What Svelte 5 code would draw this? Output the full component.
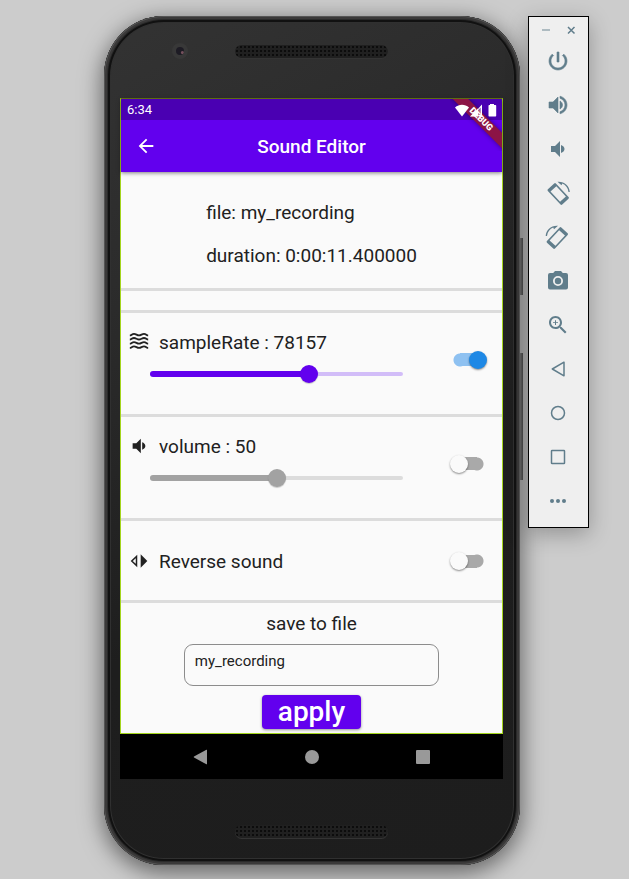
<script>
  let sampleOn = $state(true);
  let volumeOn = $state(false);
  let reverseOn = $state(false);
  let sampleRate = $state(78157);
  let volume = $state(50);
  let fileName = $state('my_recording');
  const maxRate = 124400;

  const tools = ['Power', 'Volume up', 'Volume down', 'Rotate left', 'Rotate right', 'Take screenshot', 'Zoom', 'Back', 'Home', 'Overview', 'More'];
</script>

{#snippet speaker()}
  <svg viewBox="1 1 22 22" aria-hidden="true"><path d="M5 9v6h4l5 5V4L9 9H5zm10.500-1v8c2-.7 3.500-2.200 3.500-4s-1.500-3.300-3.500-4z" /></svg>
{/snippet}

{#snippet toolIcon(name)}
  <svg viewBox="0 0 24 24" aria-hidden="true">
    {#if name === 'Power'}
      <path d="M13 3h-2v10h2V3zm4.830 2.170l-1.420 1.420C17.990 7.860 19 9.810 19 12c0 3.870-3.130 7-7 7s-7-3.130-7-7c0-2.190 1.010-4.140 2.580-5.420L6.170 5.170C4.230 6.820 3 9.260 3 12c0 4.970 4.030 9 9 9s9-4.030 9-9c0-2.740-1.230-5.180-3.170-6.830z" stroke="currentColor" stroke-width=".6" />
    {:else if name === 'Volume up'}
      <path d="M3 9v6h4l5 5V4L7 9H3zm13.500 3c0-1.770-1.020-3.290-2.500-4.030v8.050c1.480-.73 2.500-2.250 2.500-4.020zM14 3.230v2.060c2.890.86 5 3.540 5 6.710s-2.110 5.850-5 6.710v2.060c4.010-.91 7-4.490 7-8.770s-2.990-7.860-7-8.770z" stroke="currentColor" stroke-width=".6" />
    {:else if name === 'Volume down'}
      <path d="M5 9v6h4l5 5V4L9 9H5zm10-1v8c2-.7 3.500-2.200 3.500-4s-1.500-3.300-3.500-4z" />
    {:else if name === 'Rotate left' || name === 'Rotate right'}
      <g transform={name === 'Rotate right' ? 'matrix(-1 0 0 1 23.500 0)' : ''}>
        <path transform="translate(12.200 13) rotate(-43)" fill-rule="evenodd" d="M-4.300-10.500h8.600a1.200 1.200 0 0 1 1.200 1.200v18.600a1.200 1.200 0 0 1-1.200 1.200h-8.600a1.200 1.200 0 0 1-1.200-1.200v-18.600a1.200 1.200 0 0 1 1.200-1.200zM-4-7v14h8v-14z" />
        <path d="M11.500.8l4 3.400.8-1.600c3.300 1.400 5.700 4.400 6.200 8.400h1.300C23.500 5 18.500.3 11.500.8z" />
      </g>
    {:else if name === 'Take screenshot'}
      <path fill-rule="evenodd" d="M9 2L7.200 4H4a2 2 0 0 0-2 2v12.500a2 2 0 0 0 2 2h16a2 2 0 0 0 2-2V6a2 2 0 0 0-2-2h-3.200L15 2H9zM12 17a5 5 0 1 1 0-10 5 5 0 0 1 0 10z" />
      <circle cx="12" cy="12" r="3.200" />
    {:else if name === 'Zoom'}
      <path d="M15.500 14h-.79l-.28-.27C15.410 12.590 16 11.110 16 9.500 16 5.910 13.090 3 9.500 3S3 5.910 3 9.500 5.910 16 9.500 16c1.610 0 3.090-.59 4.230-1.570l.27.28v.79l5 4.990L20.490 19l-4.990-5zm-6 0C7.010 14 5 11.990 5 9.500S7.010 5 9.500 5 14 7.010 14 9.500 11.990 14 9.500 14zM12 9.200h-2v-2h-1v2H7v.9h2v2h1v-2h2v-.9z" />
    {:else if name === 'Back'}
      <path d="M18 5.200v13.600L6.300 12z" class="line" />
    {:else if name === 'Home'}
      <circle cx="12" cy="12" r="6.500" class="line" />
    {:else if name === 'Overview'}
      <rect x="5.500" y="5.500" width="13" height="13" rx=".6" class="line" />
    {:else}
      <circle cx="6" cy="12" r="2" /><circle cx="12" cy="12" r="2" /><circle cx="18" cy="12" r="2" />
    {/if}
  </svg>
{/snippet}

<div class="desk">
  <div class="phone">
    <span class="side power"></span>
    <span class="side rocker"></span>
    <div class="forehead">
      <span class="camera"></span>
      <span class="grille"></span>
    </div>

    <main class="screen">
      <header>
        <div class="status">
          <span>6:34</span>
          <svg class="signals" viewBox="0 0 42 14" aria-hidden="true">
            <path d="M7 13.500L0 4.500C4 .8 10 .8 14 4.500z" />
            <path d="M15 13.500L27 1.500v12z" opacity=".35" />
            <path d="M15 13.500l8-8v8zM24 13.500v-1.500h1.700V4.600L23 7.300 22 7.200l5-5.700v12z" />
            <path d="M35 2V1h4v1h1.500q.7 0 .7.700v10.100q0 .7-.7.700h-6.300q-.7 0-.7-.7V2.700q0-.7.7-.7z" />
          </svg>
        </div>
        <div class="appbar">
          <button class="back" aria-label="Back">
            <svg viewBox="0 0 24 24" aria-hidden="true"><path d="M20 11H7.830l5.590-5.590L12 4l-8 8 8 8 1.410-1.410L7.830 13H20v-2z" /></svg>
          </button>
          <h1>Sound Editor</h1>
        </div>
        <div class="corner"><span class="ribbon">DEBUG</span></div>
      </header>

      <section class="info">
        <div>
          <p>file: my_recording</p>
          <p>duration: 0:00:11.400000</p>
        </div>
      </section>
      <div class="spacer"></div>

      <section class="row">
        <div class="main">
          <label class="name" for="rate">
            <svg viewBox="0 0 24 24" class="waves" aria-hidden="true">
              {#each [3, 8, 13, 18] as y}
                <path d="M1 {y + 1}c2 0 2.500-1.800 5-1.800s3.500 1.800 6 1.800 3.500-1.800 6-1.800 3 1.800 5 1.800" />
              {/each}
            </svg>
            <span>sampleRate : {sampleRate}</span>
          </label>
          <div class="slider" class:off={!sampleOn}>
            <span class="rail"><span style="width: {(sampleRate / maxRate) * 100}%"></span></span>
            <input id="rate" type="range" min="0" max={maxRate} bind:value={sampleRate} disabled={!sampleOn} />
          </div>
        </div>
        <input class="switch" type="checkbox" role="switch" aria-label="Change sample rate" bind:checked={sampleOn} />
      </section>

      <section class="row">
        <div class="main">
          <label class="name" for="volume">{@render speaker()}<span>volume : {volume}</span></label>
          <div class="slider" class:off={!volumeOn}>
            <span class="rail"><span style="width: {volume}%"></span></span>
            <input id="volume" type="range" min="0" max="100" bind:value={volume} disabled={!volumeOn} />
          </div>
        </div>
        <input class="switch" type="checkbox" role="switch" aria-label="Change volume" bind:checked={volumeOn} />
      </section>

      <section class="row short">
        <label class="name" for="reverse">
          <svg viewBox="0 0 24 24" aria-hidden="true">
            <path d="M9 6.500v11L3.300 12z" fill="none" stroke="currentColor" stroke-width="1.800" /><path d="M14 4v16l8-8z" />
          </svg>
          <span>Reverse sound</span>
        </label>
        <input id="reverse" class="switch" type="checkbox" role="switch" bind:checked={reverseOn} />
      </section>

      <form class="save" onsubmit={(e) => e.preventDefault()}>
        <label for="file">save to file</label>
        <input id="file" type="text" bind:value={fileName} />
        <button type="submit">apply</button>
      </form>
    </main>

    <nav>
      <button aria-label="Back"><svg viewBox="0 0 16 16"><path d="M14 1v14q0 .5-.6.300L1 8.500q-.5-.5 0-1L13.400.700q.6-.2.600.300z" /></svg></button>
      <button aria-label="Home"><svg viewBox="0 0 16 16"><circle cx="8" cy="8" r="7" /></svg></button>
      <button aria-label="Overview"><svg viewBox="0 0 16 16"><rect x="1" y="1" width="14" height="14" rx="1" /></svg></button>
    </nav>
    <div class="chin"><span class="grille"></span></div>
  </div>

  <aside>
    <div class="window">
      <button aria-label="Minimize"><svg viewBox="0 0 10 10"><path d="M1 5h8" opacity=".6" /></svg></button>
      <button aria-label="Close"><svg viewBox="0 0 10 10"><path d="M2 2l6.500 6.500M8.500 2L2 8.500" /></svg></button>
    </div>
    {#each tools as name}
      <button class="tool" aria-label={name}>{@render toolIcon(name)}</button>
    {/each}
  </aside>
</div>

<style>
  :global(body) {
    background: #ccc;
  }
  .desk {
    display: flex;
    align-items: flex-start;
    gap: 8px;
    box-sizing: border-box;
    min-height: 100vh;
    padding: 16px 40px 14px 104px;
    font-family: Roboto, "Liberation Sans", sans-serif;
    color: #212121;
    overflow: hidden;
  }
  button {
    padding: 0;
    border: 0;
    background: none;
    color: inherit;
    font-family: inherit;
    cursor: pointer;
  }
  svg {
    display: block;
    fill: currentColor;
  }

  .phone {
    position: relative;
    flex: 1;
    min-width: 0;
    box-sizing: border-box;
    padding: 0 17px 0 16px;
    border-radius: 60px;
    background: linear-gradient(150deg, #333 0%, #2c2c2c 25%, #1e1e1e 60%, #1d1d1d 100%);
    box-shadow:
      inset 0 0 0 1px #555,
      inset 0 0 0 3px #3a3939,
      inset 0 0 0 4px #2a2a2a,
      inset 0 0 0 6px #111,
      inset 0 0 0 7px #303030,
      0 6px 22px 2px rgba(0, 0, 0, 0.5);
  }
  .side {
    position: absolute;
    left: 100%;
    width: 3px;
    background: linear-gradient(90deg, #666, #444);
  }
  .power {
    top: 222px;
    height: 57px;
  }
  .rocker {
    top: 337px;
    height: 127px;
  }
  .forehead {
    display: grid;
    grid-template-columns: 1fr auto 1fr;
    align-items: center;
    height: 70px;
    padding-bottom: 12px;
  }
  .forehead .grille {
    grid-column: 2;
  }
  .camera {
    width: 8px;
    height: 8px;
    margin-left: 52px;
    border: 4px solid #383838;
    border-radius: 50%;
    background: radial-gradient(circle at 80% 70%, #75505c 0 1px, #1d1b24 2px);
  }
  .grille {
    width: 153px;
    height: 13px;
    border-radius: 7px;
    background: radial-gradient(circle, #0c0c0c 1px, transparent 1px) 0 0 / 4px 4px, #202020;
    box-shadow: 0 1px 0 #343434;
  }
  .chin {
    display: flex;
    justify-content: center;
    align-items: center;
    height: 68px;
    padding-top: 18px;
  }

  .screen {
    border: 1px solid #a4d51c;
    border-top-color: #6b7d13;
    background: #fafafa;
    font-size: 19px;
  }
  header {
    position: relative;
    background: #6200ee;
    color: #fff;
    box-shadow: 0 1px 4px rgba(0, 0, 0, 0.5);
  }
  .status {
    display: flex;
    justify-content: space-between;
    align-items: center;
    height: 21px;
    padding: 0 5px 0 6px;
    background: #4a00b2;
    font-size: 13px;
  }
  .signals {
    position: relative;
    z-index: 2;
    width: 42px;
    height: 14px;
  }
  .appbar {
    display: grid;
    grid-template-columns: 50px 1fr 50px;
    align-items: center;
    height: 52px;
  }
  .back {
    display: grid;
    place-items: center;
    height: 52px;
  }
  .back svg {
    width: 22px;
    height: 22px;
  }
  h1 {
    margin: 0;
    text-align: center;
    font-size: 19px;
    font-weight: 500;
  }
  .corner {
    position: absolute;
    top: 0;
    right: 0;
    width: 52px;
    height: 52px;
    overflow: hidden;
  }
  .ribbon {
    position: absolute;
    top: 15px;
    left: -14px;
    width: 90px;
    height: 11px;
    transform: rotate(45deg);
    background: #8c1446;
    box-shadow: 0 0 5px rgba(0, 0, 0, 0.4);
    font-size: 9px;
    line-height: 11px;
    font-weight: 900;
    text-align: center;
  }

  .info {
    display: flex;
    justify-content: center;
    padding: 19px 0 11px;
    border-bottom: 3px solid #dcdcdc;
  }
  .info p {
    margin: 0;
    height: 43px;
    line-height: 43px;
  }
  .spacer {
    height: 19px;
    border-bottom: 3px solid #dcdcdc;
  }
  .row {
    display: flex;
    align-items: center;
    gap: 38px;
    padding: 13px 15px 24px 8px;
    border-bottom: 3px solid #dcdcdc;
  }
  .main,
  .row .name {
    flex: 1;
  }
  .name {
    display: flex;
    align-items: center;
    gap: 10px;
    height: 32px;
  }
  .name svg {
    width: 20px;
    height: 20px;
  }
  .name .waves {
    fill: none;
    stroke: currentColor;
    stroke-width: 2.200;
  }
  .short {
    padding-top: 24px;
    padding-bottom: 23px;
  }
  .slider {
    display: grid;
    align-items: center;
    height: 32px;
    margin-left: 12px;
    --on: #6200ee;
    --rest: #d2bdf8;
  }
  .slider.off {
    --on: #a2a2a2;
    --rest: #dcdcdc;
  }
  .rail,
  .slider input {
    grid-area: 1 / 1;
  }
  .rail {
    display: flex;
    align-items: center;
    height: 4px;
    margin: 0 9px;
    border-radius: 2px;
    background: var(--rest);
  }
  .rail span {
    height: 6px;
    border-radius: 3px;
    background: var(--on);
  }
  .slider input {
    appearance: none;
    width: 100%;
    height: 20px;
    margin: 0;
    background: none;
  }
  .slider input::-webkit-slider-thumb {
    appearance: none;
    width: 18px;
    height: 18px;
    border-radius: 50%;
    background: var(--on);
    box-shadow: 0 1px 1px rgba(0, 0, 0, 0.2);
  }
  .switch {
    appearance: none;
    display: flex;
    align-items: center;
    flex: none;
    width: 37px;
    height: 20px;
    margin: 0;
    background: linear-gradient(#a9a9a9, #a9a9a9) 11px center / 16px 13px no-repeat,
      radial-gradient(circle at 27px 10px, #a9a9a9 6px, transparent 7px);
  }
  .main + .switch {
    margin-top: 3px;
  }
  .switch::before {
    content: "";
    width: 18px;
    height: 18px;
    border-radius: 50%;
    background: #fafafa;
    box-shadow: 0 1px 2px rgba(0, 0, 0, 0.45);
  }
  .switch:checked {
    justify-content: flex-end;
    background: linear-gradient(#8ec1f1, #8ec1f1) 10px center / 16px 13px no-repeat,
      radial-gradient(circle at 10px 10px, #8ec1f1 6px, transparent 7px);
  }
  .switch:checked::before {
    background: #1e88e5;
  }

  .save {
    display: flex;
    flex-direction: column;
    align-items: center;
    padding: 9px 0 4px;
  }
  .save label {
    line-height: 24px;
    margin-bottom: 8px;
  }
  .save input {
    box-sizing: border-box;
    width: 67%;
    height: 42px;
    padding: 0 10px 8px;
    border: 1px solid #8c8c8c;
    border-radius: 9px;
    background: none;
    color: inherit;
    font: 15px Roboto, "Liberation Sans", sans-serif;
  }
  .save button {
    height: 34px;
    margin-top: 9px;
    padding: 0 16px;
    border-radius: 4px;
    background: #6200ee;
    box-shadow: 0 1px 3px rgba(0, 0, 0, 0.4);
    color: #fff;
    font-size: 28px;
    font-weight: 500;
    line-height: 34px;
  }

  nav {
    display: grid;
    grid-template-columns: repeat(3, 1fr);
    height: 45px;
    padding: 0 25px;
    background: #000;
    color: #999;
  }
  nav button,
  .tool {
    display: grid;
    place-items: center;
  }
  nav svg {
    width: 16px;
    height: 16px;
  }

  aside {
    flex: none;
    box-sizing: border-box;
    width: 61px;
    padding: 0 1px 4px 0;
    border: 1px solid #000;
    background: #efefef;
    color: #607d8b;
    box-shadow: 0 6px 22px rgba(0, 0, 0, 0.28);
    z-index: 1;
  }
  .window {
    display: flex;
    justify-content: center;
    gap: 15px;
    height: 18px;
    padding-top: 4px;
  }
  .window svg {
    width: 10px;
    height: 10px;
    stroke: currentColor;
    stroke-width: 1.500;
  }
  .tool {
    width: 100%;
    height: 44px;
  }
  .tool svg {
    width: 24px;
    height: 24px;
    overflow: visible;
  }
  .line {
    fill: none;
    stroke: currentColor;
    stroke-width: 1.500;
    stroke-linejoin: round;
  }
</style>
